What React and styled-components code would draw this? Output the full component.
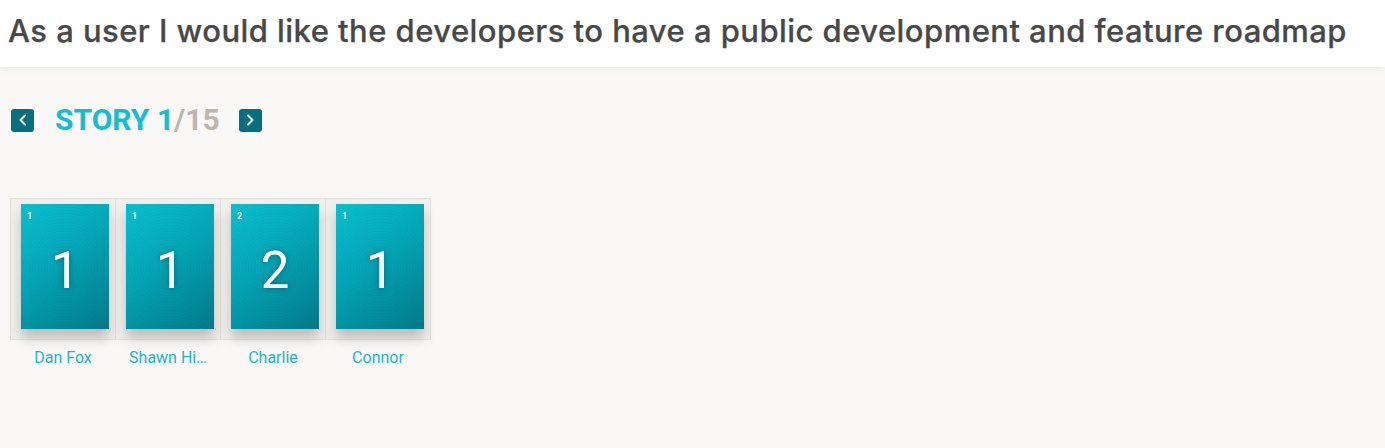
import React from "react";
import styled, { createGlobalStyle } from "styled-components";

const Global = createGlobalStyle`
  html, body { margin: 0; padding: 0; background: #f9f8f6; }
  body { font-family: Roboto, "Liberation Sans", sans-serif; }
`;

const Header = styled.header`
  height: 67px;
  background: #ffffff;
  box-shadow: 0 2px 6px rgba(0, 0, 0, 0.06);
  display: flex;
  align-items: center;
  padding: 0 8px;
  box-sizing: border-box;
`;

const Title = styled.h1`
  margin: 0;
  font-family: Inter, "Open Sans", sans-serif;
  font-weight: 500;
  font-size: 31px;
  color: #484848;
  letter-spacing: 0.45px;
  white-space: nowrap;
  transform: translateY(-3px);
  -webkit-text-stroke: 0.25px #484848;
`;

const Main = styled.main`
  padding: 41px 10px 0 10px;
`;

const Nav = styled.div`
  display: flex;
  align-items: center;
  height: 24px;
`;

const NavButton = styled.button`
  width: 23px;
  height: 23px;
  border: none;
  border-radius: 3px;
  background: #04707f;
  padding: 0;
  display: flex;
  align-items: center;
  justify-content: center;
  margin: 0 ${(p) => p.$right || 0}px 0 ${(p) => p.$left || 0}px;
  cursor: pointer;
`;

const StoryLabel = styled.span`
  font-family: Roboto, sans-serif;
  font-weight: 700;
  font-size: 30px;
  color: #14bdd0;
  line-height: 1;
`;

const Total = styled.span`
  color: #bcb6ad;
`;

const Cards = styled.div`
  display: flex;
  margin-top: 66px;
`;

const Column = styled.div`
  display: flex;
  flex-direction: column;
  align-items: stretch;
  width: 106px;
  margin-left: ${(p) => (p.$first ? 0 : -1)}px;
`;

const Cell = styled.div`
  background: #f2f0ed;
  border: 1px solid #e3e0db;
  padding: 5px 6px 10px 10px;
  height: 142px;
  box-sizing: border-box;
`;

const Card = styled.div`
  position: relative;
  width: 88px;
  height: 125px;
  background:
    repeating-radial-gradient(circle at 50% 50%, rgba(0,0,0,0.0) 0 2px, rgba(0,0,0,0.025) 2px 3px),
    linear-gradient(145deg, #0bbfcf 0%, #04a5b6 45%, #017a8a 100%);
  box-shadow: 0 9px 12px rgba(0, 0, 0, 0.22);
  display: flex;
  align-items: center;
  justify-content: center;
  padding-top: 7px;
  box-sizing: border-box;
`;

const Corner = styled.span`
  position: absolute;
  top: 7px;
  left: 6px;
  font-family: Roboto, sans-serif;
  font-weight: 700;
  font-size: 9px;
  color: #ffffff;
`;

const Big = styled.span`
  font-family: Roboto, sans-serif;
  font-weight: 400;
  font-size: 51px;
  color: #ffffff;
  text-shadow: 0 0 6px rgba(0, 0, 0, 0.35);
  line-height: 1;
`;

const Name = styled.div`
  text-align: center;
  font-family: Roboto, sans-serif;
  font-size: 16px;
  color: #1fb4c6;
  margin-top: 8px;
  padding: 0 6px;
  white-space: nowrap;
  overflow: hidden;
  text-overflow: ellipsis;
`;

const Chevron = ({ dir }) => (
  <svg width="12" height="14" viewBox="0 0 12 14">
    <path
      d={dir === "left" ? "M8 2.5 L3.5 7 L8 11.5" : "M4 2.5 L8.5 7 L4 11.5"}
      fill="none"
      stroke="#ffffff"
      strokeWidth="2"
      strokeLinecap="round"
      strokeLinejoin="round"
    />
  </svg>
);

const people = [
  { name: "Dan Fox", vote: "1" },
  { name: "Shawn Hi…", vote: "1" },
  { name: "Charlie", vote: "2" },
  { name: "Connor", vote: "1" },
];

export default function App() {
  return (
    <>
      <Global />
      <Header>
        <Title>As a user I would like the developers to have a public development and feature roadmap</Title>
      </Header>
      <Main>
        <Nav>
          <NavButton $left={1} $right={21} aria-label="Previous">
            <Chevron dir="left" />
          </NavButton>
          <StoryLabel>
            STORY 1<Total>/15</Total>
          </StoryLabel>
          <NavButton $left={19} aria-label="Next">
            <Chevron dir="right" />
          </NavButton>
        </Nav>
        <Cards>
          {people.map((p, i) => (
            <Column key={i} $first={i === 0}>
              <Cell>
                <Card>
                  <Corner>{p.vote}</Corner>
                  <Big>{p.vote}</Big>
                </Card>
              </Cell>
              <Name>{p.name}</Name>
            </Column>
          ))}
        </Cards>
      </Main>
    </>
  );
}
